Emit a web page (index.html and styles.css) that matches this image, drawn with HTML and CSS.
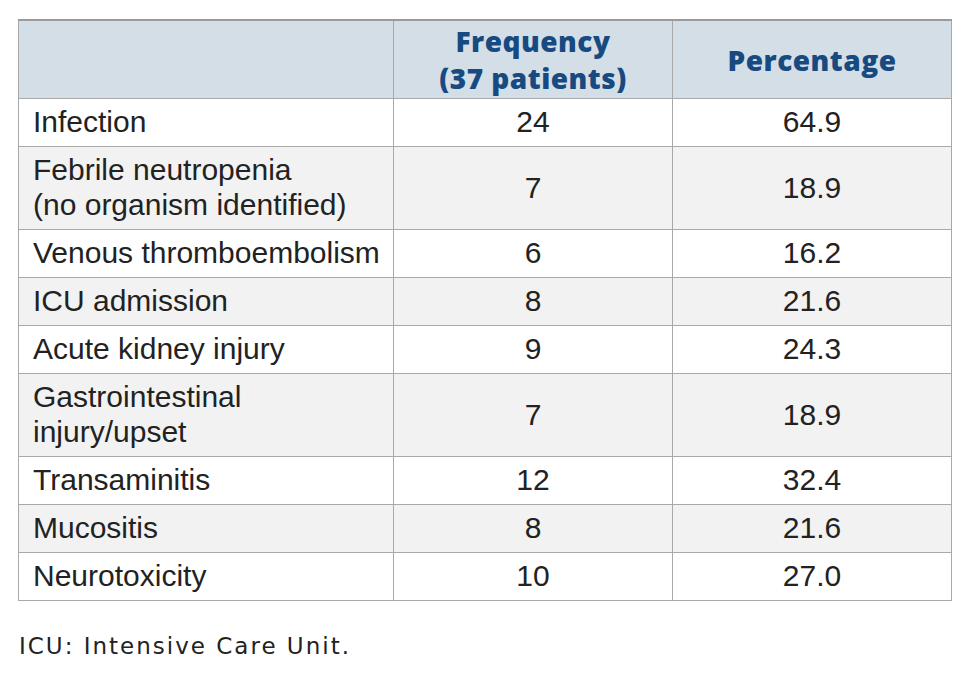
FILE: index.html
```html
<!DOCTYPE html>
<html>
<head>
<meta charset="utf-8">
<link rel="stylesheet" href="styles.css">
</head>
<body>
<div class="page">
<table class="data">
<colgroup><col class="c1"><col class="c2"><col class="c3"></colgroup>
<thead>
<tr><th></th><th>Frequency<br>(37 patients)</th><th>Percentage</th></tr>
</thead>
<tbody>
<tr><td>Infection</td><td class="num">24</td><td class="num">64.9</td></tr>
<tr><td>Febrile neutropenia<br>(no organism identified)</td><td class="num">7</td><td class="num">18.9</td></tr>
<tr><td>Venous thromboembolism</td><td class="num">6</td><td class="num">16.2</td></tr>
<tr><td>ICU admission</td><td class="num">8</td><td class="num">21.6</td></tr>
<tr><td>Acute kidney injury</td><td class="num">9</td><td class="num">24.3</td></tr>
<tr><td>Gastrointestinal<br>injury/upset</td><td class="num">7</td><td class="num">18.9</td></tr>
<tr><td>Transaminitis</td><td class="num">12</td><td class="num">32.4</td></tr>
<tr><td>Mucositis</td><td class="num">8</td><td class="num">21.6</td></tr>
<tr><td>Neurotoxicity</td><td class="num">10</td><td class="num">27.0</td></tr>
</tbody>
</table>
<p class="note">ICU: Intensive Care Unit.</p>
</div>
</body>
</html>
```
FILE: styles.css
```css
html, body { margin: 0; padding: 0; background: #fff; }
.page { padding: 19px 0 0 18px; }
.data {
  border-collapse: collapse;
  width: 933px;
  table-layout: fixed;
  font-family: "Liberation Sans", Arial, sans-serif;
  font-size: 30px;
  color: #222;
}
.c1 { width: 375px; }
.c2 { width: 279px; }
.c3 { width: 279px; }
.data th {
  background: #d3dee7;
  color: #174a80;
  font-family: "Open Sans", sans-serif;
  font-weight: 800;
  font-size: 28px;
  letter-spacing: 0.5px;
  line-height: 37px;
  padding: 2px 4px 1px;
  border: 1px solid #a9a9a9;
  border-top: 2px solid #9a9a9a;
  text-align: center;
}
.data td {
  border: 1px solid #a9a9a9;
  line-height: 35px;
  padding: 5px 4px 7px 14px;
  vertical-align: middle;
}
.data td.num { text-align: center; padding-left: 4px; }
.data tbody tr:nth-child(even) td { background: #f2f2f2; }
.note {
  margin: 32px 0 0 1px;
  font-family: "DejaVu Sans", sans-serif;
  font-size: 23px;
  letter-spacing: 2px;
  color: #222;
}
```
